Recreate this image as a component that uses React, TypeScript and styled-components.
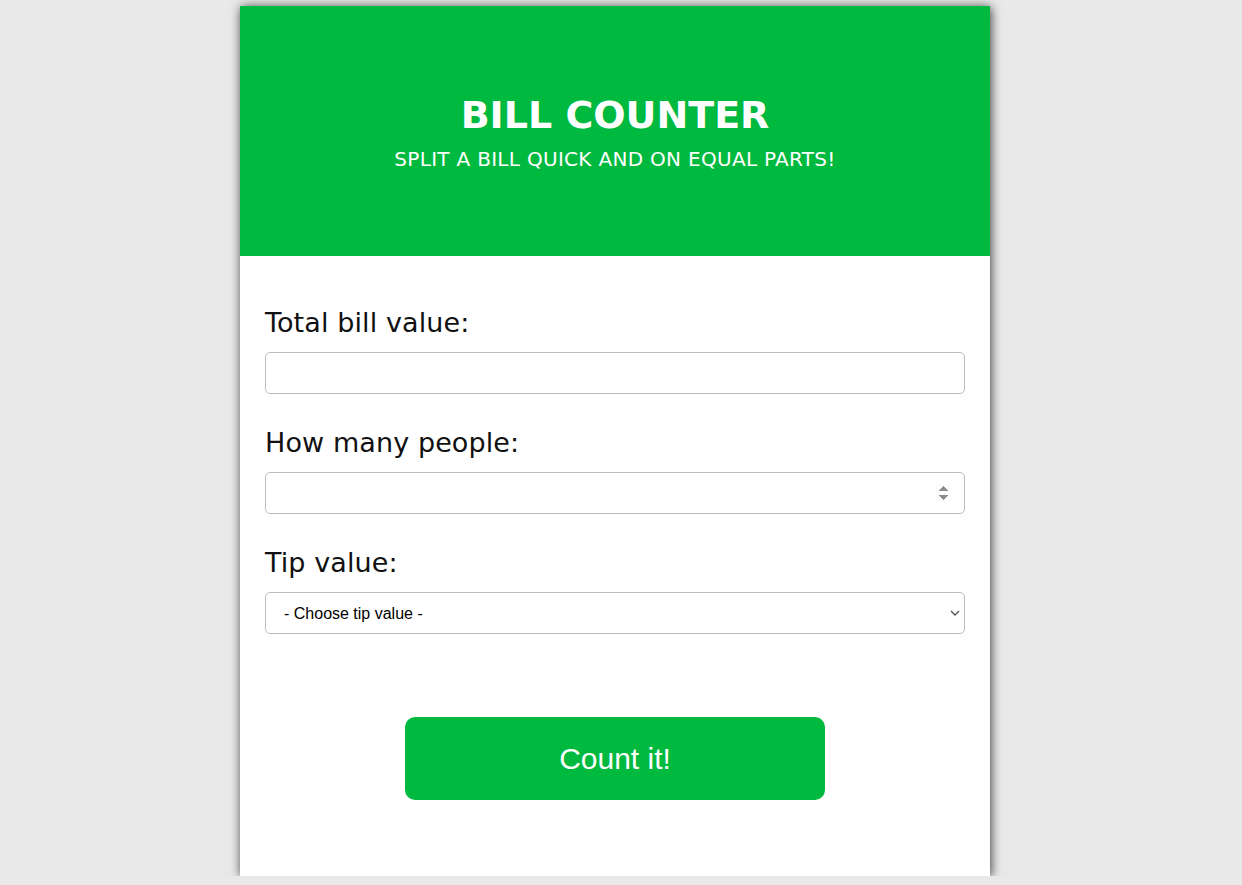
import React from "react";
import styled, { createGlobalStyle } from "styled-components";

const GlobalStyle = createGlobalStyle`
  html, body {
    margin: 0;
    padding: 0;
    background: #e9e9e9;
  }
  body {
    font-family: "DejaVu Sans", "Liberation Sans", sans-serif;
  }
  * { box-sizing: border-box; }
`;

const Page = styled.div`
  width: calc(100% - 12px);
  padding-top: 6px;
  display: flex;
  justify-content: center;
`;

const Card = styled.div`
  width: 750px;
  background: #ffffff;
  box-shadow: 1px 1px 10px rgba(0, 0, 0, 0.75);
  display: flex;
  flex-direction: column;
`;

const Header = styled.header`
  height: 250px;
  background: #00b93f;
  color: #ffffff;
  display: flex;
  flex-direction: column;
  align-items: center;
  justify-content: center;
  gap: 10px;
  padding-top: 2px;
`;

const Title = styled.h1`
  margin: 0;
  font-family: "DejaVu Sans", sans-serif;
  font-weight: 700;
  font-size: 38px;
  line-height: 44px;
`;

const Subtitle = styled.p`
  margin: 0;
  font-family: "DejaVu Sans", sans-serif;
  font-weight: 400;
  font-size: 20px;
  line-height: 24px;
  letter-spacing: 0.3px;
`;

const Form = styled.form`
  padding: 52px 25px 76px;
  display: flex;
  flex-direction: column;
`;

const Field = styled.div`
  display: flex;
  flex-direction: column;
  gap: 14px;
  & + & {
    margin-top: 34px;
  }
`;

const Label = styled.label`
  font-family: "DejaVu Sans", sans-serif;
  font-size: 27px;
  line-height: 30px;
  letter-spacing: 0.1px;
  color: #111111;
`;

const Input = styled.input`
  width: 100%;
  height: 42px;
  border: 1px solid #bdbdbd;
  border-radius: 5px;
  padding: 0 13px;
  font-family: "Liberation Sans", Arial, sans-serif;
  font-size: 16px;
  background: #ffffff;
  outline: none;
  &::-webkit-inner-spin-button {
    opacity: 1;
  }
`;

const Select = styled.select`
  width: 100%;
  height: 42px;
  border: 1px solid #bdbdbd;
  border-radius: 5px;
  padding: 0 18px;
  font-family: "Liberation Sans", Arial, sans-serif;
  font-size: 16px;
  color: #000000;
  outline: none;
  appearance: none;
  -webkit-appearance: none;
  background: #ffffff
    url("data:image/svg+xml;utf8,<svg xmlns='http://www.w3.org/2000/svg' width='10' height='6' viewBox='0 0 10 6'><path d='M1 1l4 4 4-4' fill='none' stroke='%23555' stroke-width='1.4'/></svg>")
    no-repeat right 4px center;
`;

const Button = styled.button`
  align-self: center;
  margin-top: 83px;
  width: 420px;
  height: 83px;
  border: none;
  border-radius: 10px;
  background: #00b93f;
  color: #ffffff;
  font-family: "Liberation Sans", Arial, sans-serif;
  font-size: 30px;
  cursor: pointer;
`;

export default function App() {
  return (
    <>
      <GlobalStyle />
      <Page>
        <Card>
          <Header>
            <Title>BILL COUNTER</Title>
            <Subtitle>SPLIT A BILL QUICK AND ON EQUAL PARTS!</Subtitle>
          </Header>
          <Form onSubmit={(e) => e.preventDefault()}>
            <Field>
              <Label htmlFor="bill">Total bill value:</Label>
              <Input id="bill" type="text" />
            </Field>
            <Field>
              <Label htmlFor="people">How many people:</Label>
              <Input id="people" type="number" />
            </Field>
            <Field>
              <Label htmlFor="tip">Tip value:</Label>
              <Select id="tip" defaultValue="">
                <option value="">- Choose tip value -</option>
                <option value="0.05">5%</option>
                <option value="0.1">10%</option>
                <option value="0.15">15%</option>
                <option value="0.2">20%</option>
              </Select>
            </Field>
            <Button type="submit">Count it!</Button>
          </Form>
        </Card>
      </Page>
    </>
  );
}
